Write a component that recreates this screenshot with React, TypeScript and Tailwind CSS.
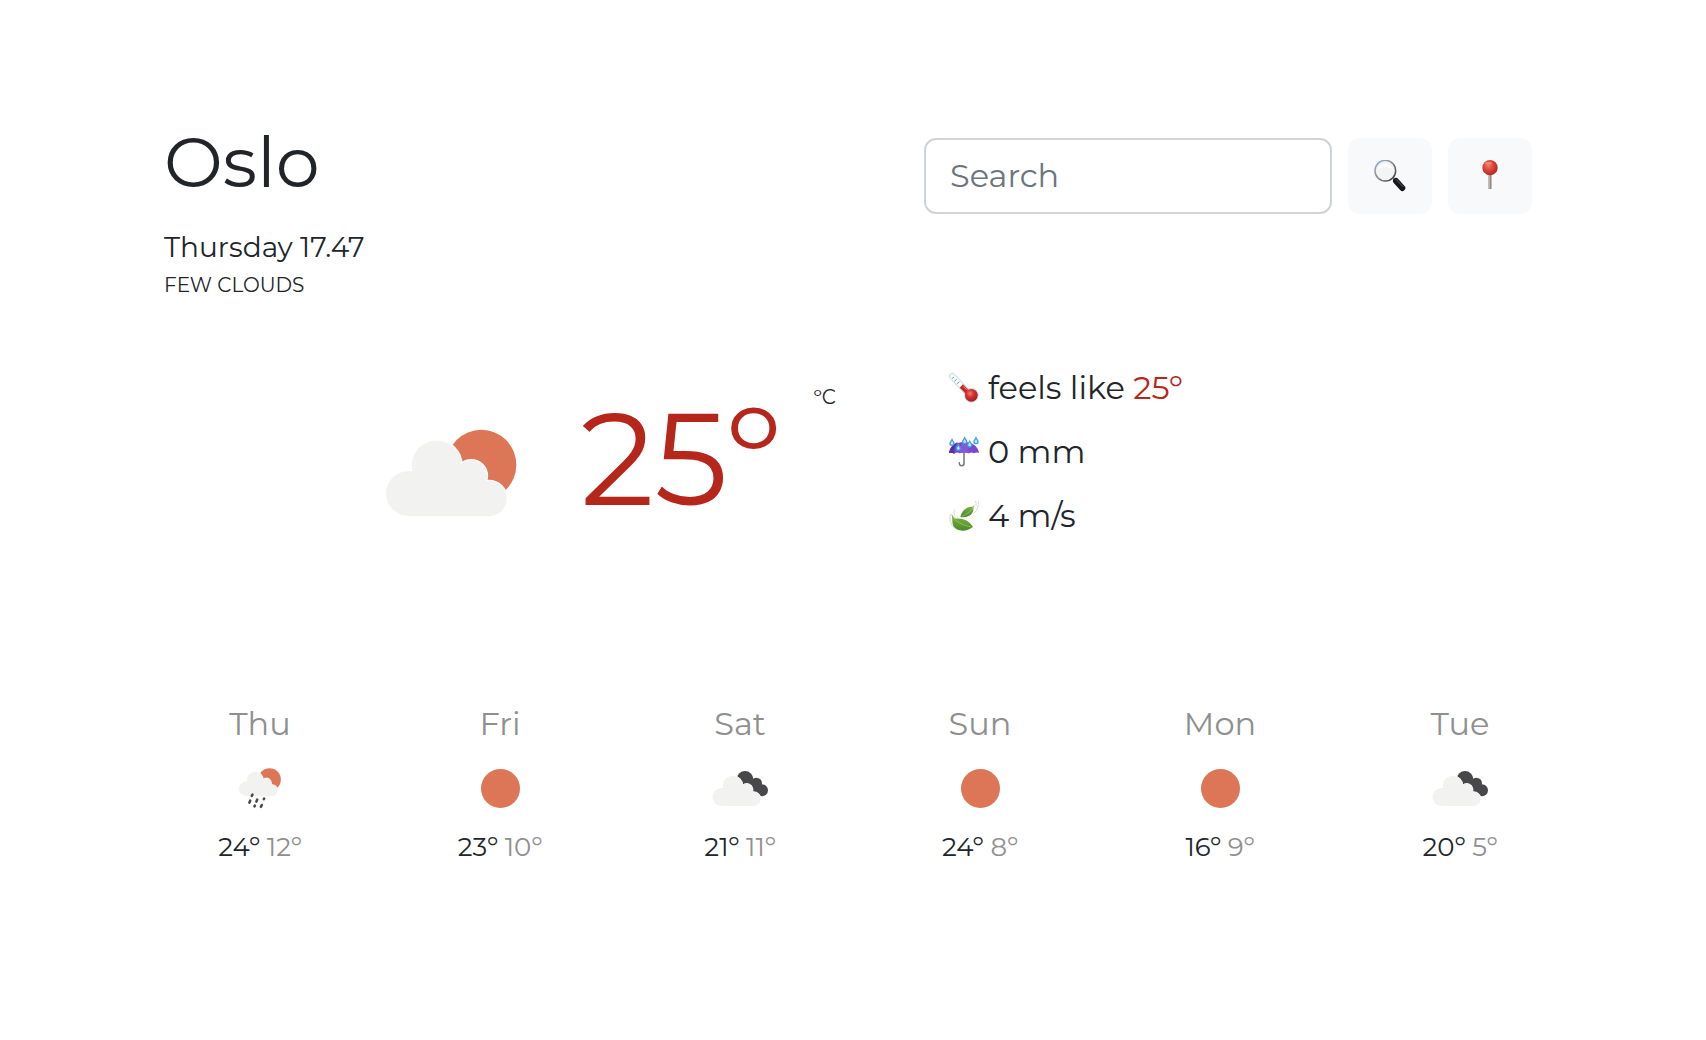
import React, { useState } from "react";

const CloudShape = () => (
  <g>
    <circle cx="111" cy="370" r="67" />
    <circle cx="196" cy="286" r="75" />
    <circle cx="300" cy="317" r="47" />
    <circle cx="353" cy="385" r="53" />
    <path d="M111 303 L125 303 L196 286 L300 316 L342 334 L353 340 V438 H111 Z" />
  </g>
);

const Cloud = () => (
  <g>
    <g fill="#ffffff" stroke="#ffffff" strokeWidth="7">
      <CloudShape />
    </g>
    <g fill="#f2f2f0">
      <CloudShape />
    </g>
  </g>
);

const FewClouds = ({ className }: { className: string }) => (
  <svg viewBox="44 177 393 263" className={className} role="img" aria-label="few clouds">
    <circle cx="330" cy="284" r="105" fill="#dc7656" />
    <Cloud />
  </svg>
);

const Rain = () => (
  <svg viewBox="-15 -21 240 240" className="size-20" role="img" aria-label="rain">
    <g transform="translate(27.5 -18) scale(.322)">
      <circle cx="330" cy="284" r="105" fill="#dc7656" />
      <Cloud />
    </g>
    <g stroke="#48484a" strokeWidth="7.5" strokeLinecap="round">
      <path d="M82.500 118.500 L80.500 122.500 M75.500 137 L73 143 M96.500 134 L94 140 M117.500 130.500 L116.500 132.500 M89.500 152 L88.500 154 M110.500 150 L108 155.500" />
    </g>
  </svg>
);

const Sun = () => (
  <svg viewBox="0 0 80 80" className="size-20" role="img" aria-label="clear sky">
    <circle cx="40.500" cy="40.500" r="19.500" fill="#dc7656" />
  </svg>
);

const BrokenClouds = () => (
  <svg viewBox="0 -21 240 240" className="size-20" role="img" aria-label="broken clouds">
    <g fill="#48484a">
      <circle cx="135" cy="73" r="25" />
      <circle cx="169" cy="85" r="17" />
      <circle cx="186" cy="106" r="18" />
      <path d="M135 60 L160 72 L184 95 L184 122 L130 110 Z" />
    </g>
    <g transform="translate(20 -22.400) scale(.4)">
      <Cloud />
    </g>
  </svg>
);

const Magnifier = () => (
  <svg viewBox="42 44 96 96" className="size-8" aria-hidden="true">
    <defs>
      <linearGradient id="rim" x1="0" y1="0" x2="1" y2="1">
        <stop offset="0" stopColor="#8fb4dd" />
        <stop offset=".5" stopColor="#8b8b8b" />
        <stop offset="1" stopColor="#2e2e2e" />
      </linearGradient>
    </defs>
    <path d="M99 98 L106 105" stroke="#777777" strokeWidth="6" />
    <path d="M108 107 L127 128" stroke="#16191c" strokeWidth="18" strokeLinecap="round" />
    <path d="M109 103 L129 124" stroke="#626a6e" strokeWidth="2.500" strokeLinecap="round" />
    <circle cx="76" cy="76" r="31" fill="#f3f4f4" stroke="url(#rim)" strokeWidth="4.500" />
    <path d="M53 72 A24 24 0 0 1 98 70 Q76 60 53 72" fill="#ffffff" />
  </svg>
);

const Pin = () => (
  <svg viewBox="342 44 96 96" className="size-8" aria-hidden="true">
    <defs>
      <radialGradient id="pinHead" cx=".4" cy=".35" r=".65">
        <stop offset="0" stopColor="#f07a68" />
        <stop offset=".5" stopColor="#dc4438" />
        <stop offset="1" stopColor="#a92c25" />
      </radialGradient>
    </defs>
    <path d="M390 88 V131" stroke="#8d8078" strokeWidth="9" />
    <path d="M389 88 V130" stroke="#c4bab4" strokeWidth="3" />
    <circle cx="390" cy="67" r="23" fill="url(#pinHead)" />
    <ellipse cx="385" cy="54" rx="11" ry="4" fill="#f8a99c" opacity=".5" />
  </svg>
);

const Thermometer = () => (
  <svg viewBox="24 18 96 96" className="size-8" role="img" aria-label="thermometer">
    <defs>
      <radialGradient id="bulb" cx=".4" cy=".35" r=".65">
        <stop offset="0" stopColor="#f08078" />
        <stop offset=".45" stopColor="#d8302e" />
        <stop offset="1" stopColor="#a81c1c" />
      </radialGradient>
    </defs>
    <path d="M37 31 L82 79" stroke="#bcdbe8" strokeWidth="20" strokeLinecap="round" />
    <path d="M37 31 L82 79" stroke="#f7fbfd" strokeWidth="15" strokeLinecap="round" />
    <circle cx="94" cy="88" r="22" fill="#c7dde6" />
    <path d="M64 60 L90 86" stroke="#c52826" strokeWidth="14" />
    <path d="M36 38 L42 33 M43 46 L50 40 M50 54 L58 47" stroke="#8b979d" strokeWidth="3" />
    <circle cx="94" cy="88" r="19" fill="url(#bulb)" />
    <path d="M71 61 L82 72" stroke="#ed8b85" strokeWidth="3" strokeLinecap="round" />
  </svg>
);

const Drop = ({ x, y }: { x: number; y: number }) => (
  <g transform={`translate(${x} ${y})`}>
    <path d="M0 -12 C2 -5 8 -1 8 4 A8 8 0 0 1 -8 4 C-8 -1 -2 -5 0 -12 Z" fill="#3c9ee6" />
    <path d="M0 -4 C1 -1 4 1 4 4 A4 4 0 0 1 -4 4 C-4 1 -1 -1 0 -4 Z" fill="#bfe8fd" />
  </g>
);

const Umbrella = () => (
  <svg viewBox="24 21 96 96" className="size-8" role="img" aria-label="umbrella with rain">
    <path d="M72 66 V102 A7 7 0 0 1 58 104 V101" fill="none" stroke="#77777c" strokeWidth="4.500" strokeLinecap="round" />
    <path d="M27 72 C32 28 112 28 117 72 Q109 68 102 73 Q94 68 87 73 Q73 68 59 73 Q51 68 43 74 Q35 69 27 72 Z" fill="#7947c9" />
    <path d="M59 73 C58 56 64 42 72 38 C82 44 87 58 87 73 Q73 68 59 73 Z" fill="#8657d8" />
    <path d="M27 72 C30 55 40 44 54 40 C44 49 42 62 43 74 Q35 69 27 72 Z" fill="#5730a4" />
    <Drop x={36} y={39} />
    <Drop x={74} y={34} />
    <Drop x={108} y={34} />
    <Drop x={55} y={54} />
    <Drop x={89} y={44} />
  </svg>
);

const Leaves = () => (
  <svg viewBox="26 22 96 96" className="size-8" role="img" aria-label="wind">
    <defs>
      <linearGradient id="leaf" x1="0" y1="0" x2="0" y2="1">
        <stop offset="0" stopColor="#84b84a" />
        <stop offset="1" stopColor="#4a8a26" />
      </linearGradient>
    </defs>
    <g fill="none" stroke="#d9dadb" strokeWidth="3" strokeLinecap="round">
      <path d="M33 66 Q27 88 44 106" />
      <path d="M45 51 Q42 62 46 70" />
      <path d="M117 27 Q120 46 104 62" />
      <path d="M109 26 Q112 32 110 40" />
    </g>
    <path d="M36 62 C40 70 43 75 50 78 C70 76 90 84 101 103 C82 118 52 118 42 100 C37 88 41 80 36 62 Z" fill="url(#leaf)" />
    <path d="M38 68 Q50 94 96 103" fill="none" stroke="#a5cf68" strokeWidth="2" />
    <path d="M107 36 Q104 40 102 44 C105 62 90 77 63 73 C68 53 82 41 99 42 Z" fill="url(#leaf)" />
    <path d="M104 40 Q92 62 67 72" fill="none" stroke="#a5cf68" strokeWidth="2" />
  </svg>
);

const forecast = [
  { day: "Thu", Icon: Rain, max: 24, min: 12 },
  { day: "Fri", Icon: Sun, max: 23, min: 10 },
  { day: "Sat", Icon: BrokenClouds, max: 21, min: 11 },
  { day: "Sun", Icon: Sun, max: 24, min: 8 },
  { day: "Mon", Icon: Sun, max: 16, min: 9 },
  { day: "Tue", Icon: BrokenClouds, max: 20, min: 5 },
];

export default function App() {
  const [query, setQuery] = useState("");

  return (
    <main className="min-h-screen bg-white pt-[120px] pr-[126px] pb-20 pl-[140px] font-['Montserrat','Inter',sans-serif] text-[#212529]">
      <header className="grid grid-cols-[minmax(0,760fr)_minmax(0,632fr)] items-start px-6">
        <div>
          <h1 className="text-[70px] leading-[84px]">Oslo</h1>
          <p className="mt-[23px] text-[28px] leading-[40px]">Thursday 17.47</p>
          <p className="mt-[2px] text-[20px] leading-[32px] uppercase">few clouds</p>
        </div>
        <form
          className="mt-[18px] mr-6 flex gap-4"
          onSubmit={(event: React.FormEvent) => event.preventDefault()}
        >
          <input
            type="search"
            aria-label="Search"
            placeholder="Search"
            value={query}
            onChange={(event) => setQuery(event.target.value)}
            className="h-[76px] min-w-0 flex-1 rounded-xl border-2 border-[#ced4da] bg-white px-6 pb-[2px] text-[32px] placeholder:text-[#6c757d] placeholder:opacity-100"
          />
          <button type="submit" aria-label="Search city" className="flex h-[76px] w-[84px] items-center justify-center rounded-xl bg-[#f8f9fa]">
            <Magnifier />
          </button>
          <button type="button" aria-label="Use current location" className="flex h-[76px] w-[84px] items-center justify-center rounded-xl bg-[#f8f9fa]">
            <Pin />
          </button>
        </form>
      </header>

      <section className="mt-[55px] grid grid-cols-[minmax(0,784fr)_minmax(0,608fr)] px-6">
        <div className="flex items-start justify-end pr-[112px]">
          <FewClouds className="mt-[73px] h-[88px] w-[131px]" />
          <p className="mt-[25px] ml-[64px] flex items-start">
            <span className="text-[130px] leading-[156px] text-[#b5261b]">25º</span>
            <span className="ml-[33px] text-[20px] leading-[32px]">ºC</span>
          </p>
        </div>
        <ul className="text-[32px] leading-[64px]">
          <li className="flex items-center gap-2">
            <Thermometer />
            <span>
              feels like <span className="text-[#b5261b]">25º</span>
            </span>
          </li>
          <li className="flex items-center gap-2">
            <Umbrella />
            <span>0 mm</span>
          </li>
          <li className="flex items-center gap-2">
            <Leaves />
            <span>4 m/s</span>
          </li>
        </ul>
      </section>

      <section className="mt-[152px] grid grid-cols-6 text-center">
        {forecast.map(({ day, Icon, max, min }) => (
          <article key={day} className="flex flex-col items-center">
            <h2 className="text-[32px] leading-[48px] text-[#8f8f8f]">{day}</h2>
            <Icon />
            <p className="text-[26px] leading-[38px]">
              {max}º <span className="text-[#8f8f8f]">{min}º</span>
            </p>
          </article>
        ))}
      </section>
    </main>
  );
}
